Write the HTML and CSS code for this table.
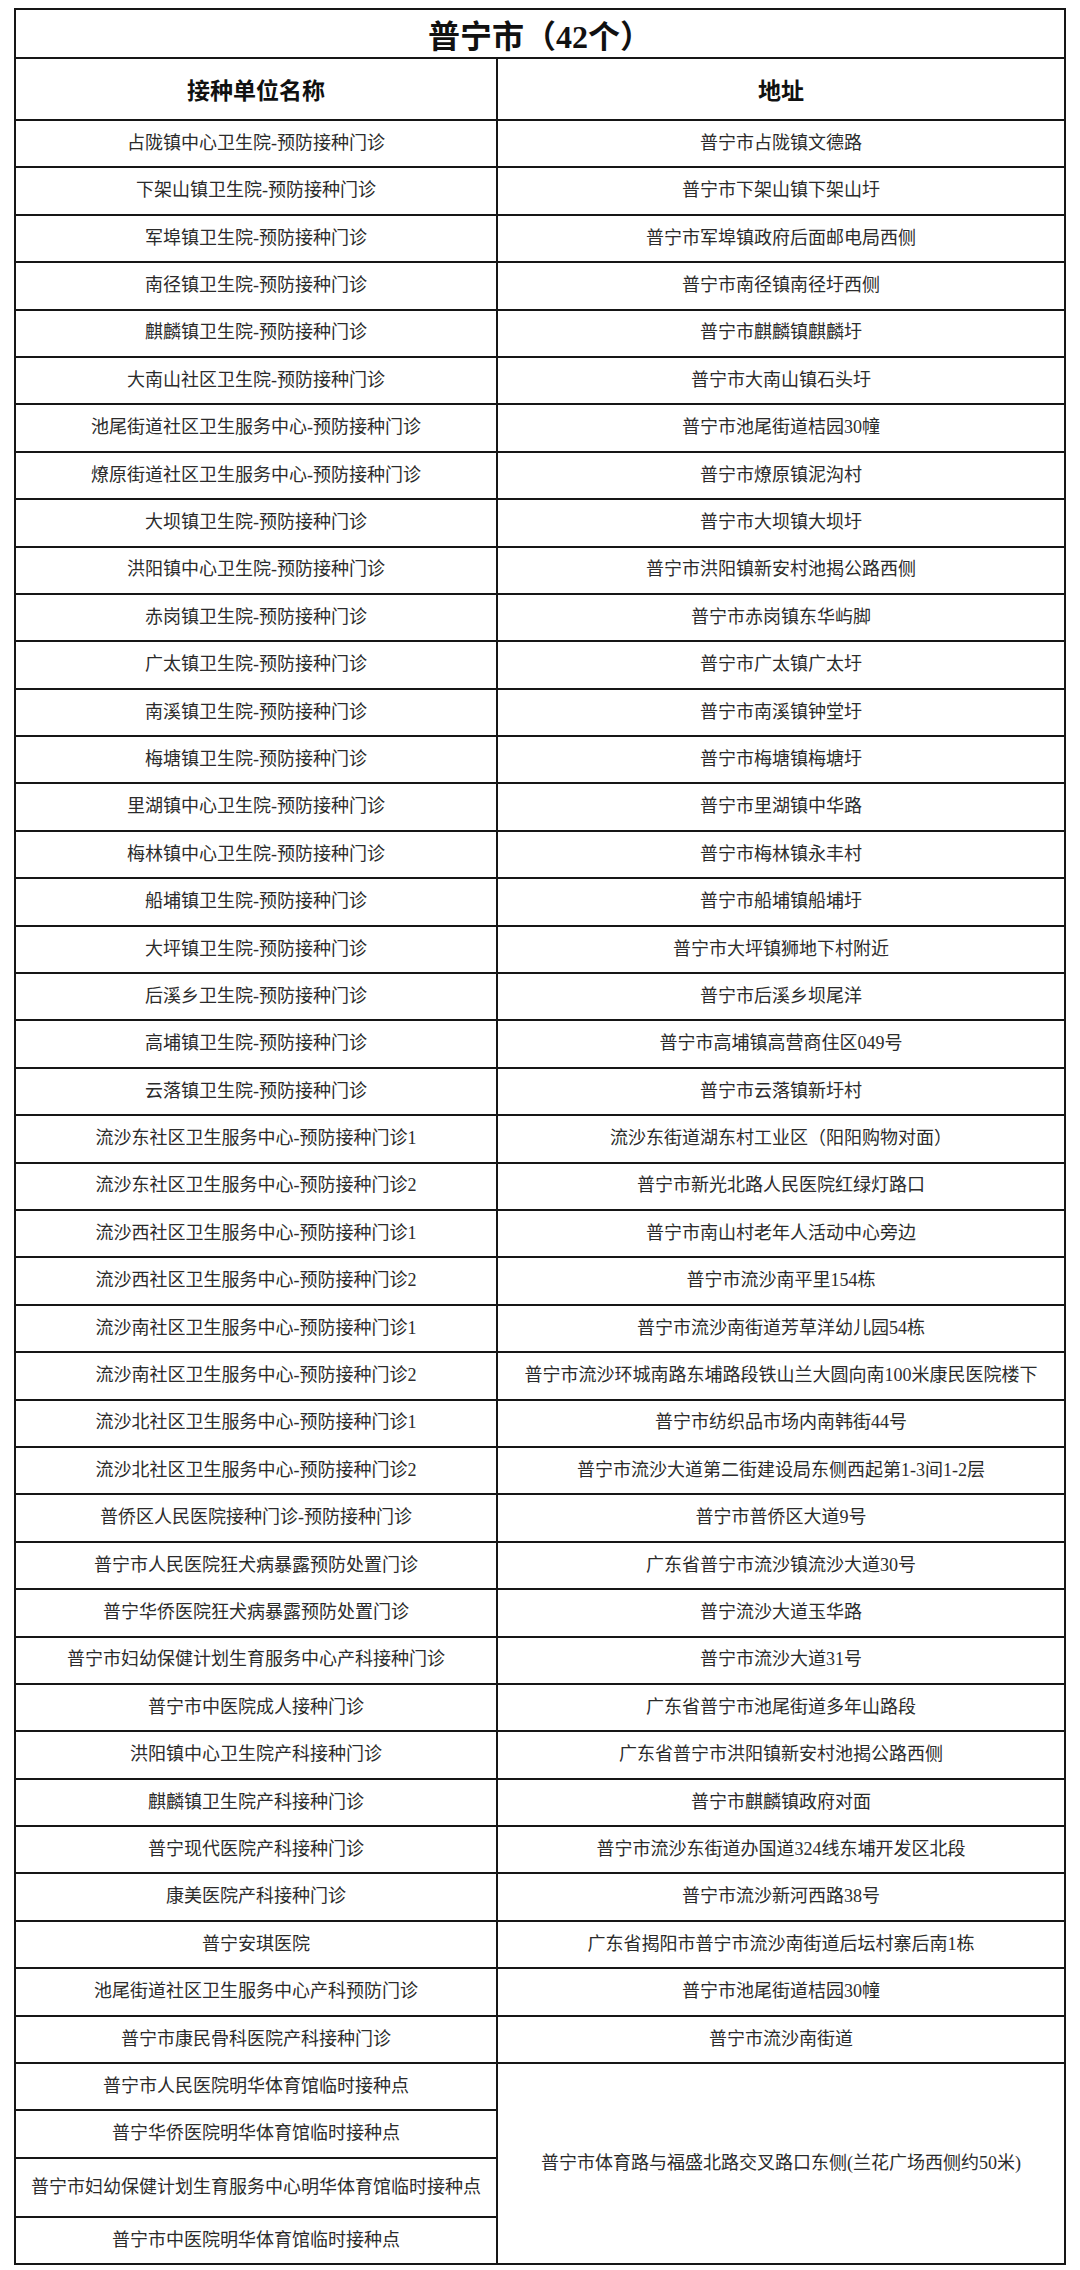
FILE: index.html
```html
<!DOCTYPE html>
<html lang="zh-CN">
<head>
<meta charset="utf-8">
<title>普宁市（42个）</title>
<link rel="stylesheet" href="styles.css">
</head>
<body>
<table class="sites">
  <colgroup><col class="col-name"><col class="col-addr"></colgroup>
  <tr class="title-row"><th colspan="2">普宁市（42个）</th></tr>
  <tr class="head-row"><th>接种单位名称</th><th>地址</th></tr>
  <tr><td>占陇镇中心卫生院-预防接种门诊</td><td>普宁市占陇镇文德路</td></tr>
  <tr><td>下架山镇卫生院-预防接种门诊</td><td>普宁市下架山镇下架山圩</td></tr>
  <tr><td>军埠镇卫生院-预防接种门诊</td><td>普宁市军埠镇政府后面邮电局西侧</td></tr>
  <tr><td>南径镇卫生院-预防接种门诊</td><td>普宁市南径镇南径圩西侧</td></tr>
  <tr><td>麒麟镇卫生院-预防接种门诊</td><td>普宁市麒麟镇麒麟圩</td></tr>
  <tr><td>大南山社区卫生院-预防接种门诊</td><td>普宁市大南山镇石头圩</td></tr>
  <tr><td>池尾街道社区卫生服务中心-预防接种门诊</td><td>普宁市池尾街道桔园30幢</td></tr>
  <tr><td>燎原街道社区卫生服务中心-预防接种门诊</td><td>普宁市燎原镇泥沟村</td></tr>
  <tr><td>大坝镇卫生院-预防接种门诊</td><td>普宁市大坝镇大坝圩</td></tr>
  <tr><td>洪阳镇中心卫生院-预防接种门诊</td><td>普宁市洪阳镇新安村池揭公路西侧</td></tr>
  <tr><td>赤岗镇卫生院-预防接种门诊</td><td>普宁市赤岗镇东华屿脚</td></tr>
  <tr><td>广太镇卫生院-预防接种门诊</td><td>普宁市广太镇广太圩</td></tr>
  <tr><td>南溪镇卫生院-预防接种门诊</td><td>普宁市南溪镇钟堂圩</td></tr>
  <tr><td>梅塘镇卫生院-预防接种门诊</td><td>普宁市梅塘镇梅塘圩</td></tr>
  <tr><td>里湖镇中心卫生院-预防接种门诊</td><td>普宁市里湖镇中华路</td></tr>
  <tr><td>梅林镇中心卫生院-预防接种门诊</td><td>普宁市梅林镇永丰村</td></tr>
  <tr><td>船埔镇卫生院-预防接种门诊</td><td>普宁市船埔镇船埔圩</td></tr>
  <tr><td>大坪镇卫生院-预防接种门诊</td><td>普宁市大坪镇狮地下村附近</td></tr>
  <tr><td>后溪乡卫生院-预防接种门诊</td><td>普宁市后溪乡坝尾洋</td></tr>
  <tr><td>高埔镇卫生院-预防接种门诊</td><td>普宁市高埔镇高营商住区049号</td></tr>
  <tr><td>云落镇卫生院-预防接种门诊</td><td>普宁市云落镇新圩村</td></tr>
  <tr><td>流沙东社区卫生服务中心-预防接种门诊1</td><td>流沙东街道湖东村工业区（阳阳购物对面）</td></tr>
  <tr><td>流沙东社区卫生服务中心-预防接种门诊2</td><td>普宁市新光北路人民医院红绿灯路口</td></tr>
  <tr><td>流沙西社区卫生服务中心-预防接种门诊1</td><td>普宁市南山村老年人活动中心旁边</td></tr>
  <tr><td>流沙西社区卫生服务中心-预防接种门诊2</td><td>普宁市流沙南平里154栋</td></tr>
  <tr><td>流沙南社区卫生服务中心-预防接种门诊1</td><td>普宁市流沙南街道芳草洋幼儿园54栋</td></tr>
  <tr><td>流沙南社区卫生服务中心-预防接种门诊2</td><td>普宁市流沙环城南路东埔路段铁山兰大圆向南100米康民医院楼下</td></tr>
  <tr><td>流沙北社区卫生服务中心-预防接种门诊1</td><td>普宁市纺织品市场内南韩街44号</td></tr>
  <tr><td>流沙北社区卫生服务中心-预防接种门诊2</td><td>普宁市流沙大道第二街建设局东侧西起第1-3间1-2层</td></tr>
  <tr><td>普侨区人民医院接种门诊-预防接种门诊</td><td>普宁市普侨区大道9号</td></tr>
  <tr><td>普宁市人民医院狂犬病暴露预防处置门诊</td><td>广东省普宁市流沙镇流沙大道30号</td></tr>
  <tr><td>普宁华侨医院狂犬病暴露预防处置门诊</td><td>普宁流沙大道玉华路</td></tr>
  <tr><td>普宁市妇幼保健计划生育服务中心产科接种门诊</td><td>普宁市流沙大道31号</td></tr>
  <tr><td>普宁市中医院成人接种门诊</td><td>广东省普宁市池尾街道多年山路段</td></tr>
  <tr><td>洪阳镇中心卫生院产科接种门诊</td><td>广东省普宁市洪阳镇新安村池揭公路西侧</td></tr>
  <tr><td>麒麟镇卫生院产科接种门诊</td><td>普宁市麒麟镇政府对面</td></tr>
  <tr><td>普宁现代医院产科接种门诊</td><td>普宁市流沙东街道办国道324线东埔开发区北段</td></tr>
  <tr><td>康美医院产科接种门诊</td><td>普宁市流沙新河西路38号</td></tr>
  <tr><td>普宁安琪医院</td><td>广东省揭阳市普宁市流沙南街道后坛村寨后南1栋</td></tr>
  <tr><td>池尾街道社区卫生服务中心产科预防门诊</td><td>普宁市池尾街道桔园30幢</td></tr>
  <tr><td>普宁市康民骨科医院产科接种门诊</td><td>普宁市流沙南街道</td></tr>
  <tr><td>普宁市人民医院明华体育馆临时接种点</td><td rowspan="4">普宁市体育路与福盛北路交叉路口东侧(兰花广场西侧约50米)</td></tr>
  <tr><td>普宁华侨医院明华体育馆临时接种点</td></tr>
  <tr class="tall-row"><td>普宁市妇幼保健计划生育服务中心明华体育馆临时接种点</td></tr>
  <tr><td>普宁市中医院明华体育馆临时接种点</td></tr>
</table>
</body>
</html>
```

FILE: styles.css
```css
html, body {
  margin: 0;
  padding: 0;
  background: #ffffff;
}

body {
  font-family: "Liberation Serif", "Noto Sans CJK SC", serif;
  color: #2b2b2b;
}

.sites {
  margin: 8px 0 0 14px;
  width: 1052px;
  border-collapse: collapse;
  table-layout: fixed;
  border: 2px solid #111;
}

.col-name {
  width: 482px;
}

.sites th,
.sites td {
  border: 2px solid #161616;
  text-align: center;
  vertical-align: middle;
  padding: 0 2px;
  white-space: nowrap;
  overflow: hidden;
}

.sites td {
  height: 45.4px;
  font-size: 18px;
  line-height: 1.2;
}

.title-row th {
  height: 47px;
  font-size: 32px;
  font-weight: 700;
  color: #111;
}

.head-row th {
  height: 60px;
  font-size: 23px;
  font-weight: 700;
  color: #111;
}

.tall-row td {
  height: 57px;
}
```
